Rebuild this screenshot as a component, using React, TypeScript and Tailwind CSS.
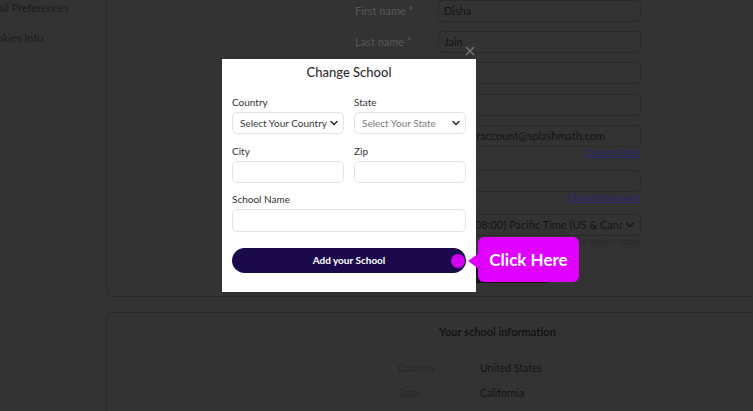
export default function App() {
  return (
    <div className="relative h-[411px] w-[753px] overflow-hidden bg-[#333333] font-['Lato',sans-serif]">
      {/* dimmed page behind the modal */}
      <div className="flex">
        <aside className="w-[106px] shrink-0 overflow-hidden">
          <ul className="-ml-[17px] flex flex-col gap-[18px] pt-[2px] text-[11px] leading-[12px] whitespace-nowrap text-[#1c1c1c]">
            <li>Email Preferences</li>
            <li>Cookies Info</li>
          </ul>
        </aside>

        <main className="flex w-[782px] shrink-0 flex-col">
          <section className="h-[297px] rounded-bl-[6px] border-b border-l border-[#2a2a2a] pl-[248px]">
            <div className="flex flex-col">
              <Row label="First name *" value="Disha" />
              <Row label="Last name *" value="Jain" className="mt-[9px]" />
              <Row label="" value="" className="mt-[9px]" />
              <Row label="" value="" className="mt-[10px]" />
              <Row label="" value="teacheraccount@splashmath.com" className="mt-[9px]" />
              <LinkLine text="Change Email" />
              <Row label="" value="" className="mt-[11px]" />
              <LinkLine text="Change Password" />
              <div className="mt-[10px] flex">
                <div className="w-[83px]" />
                <div className="flex h-[22px] w-[203px] items-center rounded-[5px] border border-[#2a2a2a] pl-[5px] pr-[6px] text-[11px] text-[#161616]">
                  <span className="flex-1 overflow-hidden whitespace-nowrap">(GMT-08:00) Pacific Time (US &amp; Canada)</span>
                  <Chevron className="ml-[4px] text-[#161616]" />
                </div>
              </div>
              <div className="flex">
                <div className="w-[83px]" />
                <p className="w-[203px] text-right text-[9px] leading-[12px] text-[#292929]">Used to see various dates</p>
              </div>
              <div className="mt-[12px] flex">
                <div className="w-[83px]" />
                <div className="ml-[32px] h-[23px] w-[80px] rounded-[4px] bg-[#141414]" />
              </div>
            </div>
          </section>

          <section className="mt-[15px] h-[120px] rounded-tl-[6px] border-l border-t border-[#2a2a2a]">
            <h2 className="pt-[12px] text-center text-[11px] font-bold leading-[14px] text-[#141414]">Your school information</h2>
            <dl className="mt-[23px] flex flex-col gap-[13px] pl-[291px] text-[10.5px] leading-[12px]">
              <div className="flex">
                <dt className="w-[82px] text-[#282828]">Country</dt>
                <dd className="text-[#141414]">United States</dd>
              </div>
              <div className="flex">
                <dt className="w-[82px] text-[#282828]">State</dt>
                <dd className="text-[#141414]">California</dd>
              </div>
            </dl>
          </section>
        </main>
      </div>

      {/* close icon */}
      <svg className="absolute left-[465px] top-[46px] h-[10px] w-[10px] text-[#7a7a7a]" viewBox="0 0 10 10" fill="none" stroke="currentColor" strokeWidth="1.2">
        <path d="M1 1l8 8M9 1l-8 8" />
      </svg>

      {/* modal */}
      <div className="absolute left-[222px] top-[59px] h-[233px] w-[254px] bg-white px-[10px] pt-[5px] text-[#333333]">
        <h1 className="text-center text-[13px] font-medium leading-[16px] text-[#2e2e2e]">Change School</h1>
        <div className="mt-[16px] grid grid-cols-2 gap-x-[10px]">
          <Field label="Country">
            <SelectBox text="Select Your Country" dark />
          </Field>
          <Field label="State">
            <SelectBox text="Select Your State" />
          </Field>
          <Field label="City" className="mt-[11px]">
            <div className="h-[22px] rounded-[5px] border border-[#e2e2ec]" />
          </Field>
          <Field label="Zip" className="mt-[11px]">
            <div className="h-[22px] rounded-[5px] border border-[#e2e2ec]" />
          </Field>
        </div>
        <Field label="School Name" className="mt-[10px]">
          <div className="h-[23px] rounded-[5px] border border-[#e2e2ec]" />
        </Field>
        <button className="mt-[16px] flex h-[25px] w-full items-center justify-center rounded-full bg-[#1a0a4c] text-[10px] font-bold text-white">
          Add your School
        </button>
      </div>

      {/* click here callout */}
      <div className="absolute left-[451px] top-[254px] h-[14px] w-[14px] rounded-full bg-[#d400f2]" />
      <div className="absolute left-[468px] top-[253px] h-0 w-0 border-y-[8px] border-r-[11px] border-y-transparent border-r-[#e000ff]" />
      <div className="absolute left-[478px] top-[237px] flex h-[45px] w-[101px] items-center justify-center rounded-[6px] bg-[#e000ff] text-[17px] font-bold text-white">
        Click Here
      </div>
    </div>
  );
}

function Row({ label, value, className = "" }: { label: string; value: string; className?: string }) {
  return (
    <div className={`flex items-center ${className}`}>
      <span className="w-[83px] text-[11px] text-[#575757]">{label}</span>
      <div className="flex h-[22px] w-[203px] items-center overflow-hidden whitespace-nowrap rounded-[5px] border border-[#2a2a2a] pl-[5px] text-[11px] text-[#141414]">
        {value}
      </div>
    </div>
  );
}

function LinkLine({ text }: { text: string }) {
  return (
    <div className="flex">
      <div className="w-[83px]" />
      <p className="w-[203px] text-right text-[9.5px] leading-[12px] text-[#2a2670] underline">{text}</p>
    </div>
  );
}

function Field({ label, className = "", children }: { label: string; className?: string; children: React.ReactNode }) {
  return (
    <div className={className}>
      <span className="block text-[10px] leading-[12px] text-[#333333]">{label}</span>
      <div className="mt-[4px]">{children}</div>
    </div>
  );
}

function SelectBox({ text, dark = false }: { text: string; dark?: boolean }) {
  return (
    <div className="flex h-[22px] items-center rounded-[5px] border border-[#e2e2ec] pl-[7px] pr-[5px] text-[10px]">
      <span className={`flex-1 whitespace-nowrap ${dark ? "text-[#3a3a3a]" : "text-[#7a7a7a]"}`}>{text}</span>
      <Chevron className="text-[#333333]" />
    </div>
  );
}

function Chevron({ className = "" }: { className?: string }) {
  return (
    <svg className={`h-[6px] w-[8px] shrink-0 ${className}`} viewBox="0 0 8 6" fill="none" stroke="currentColor" strokeWidth="1.6" strokeLinecap="round" strokeLinejoin="round">
      <path d="M1 1.5l3 3 3-3" />
    </svg>
  );
}
